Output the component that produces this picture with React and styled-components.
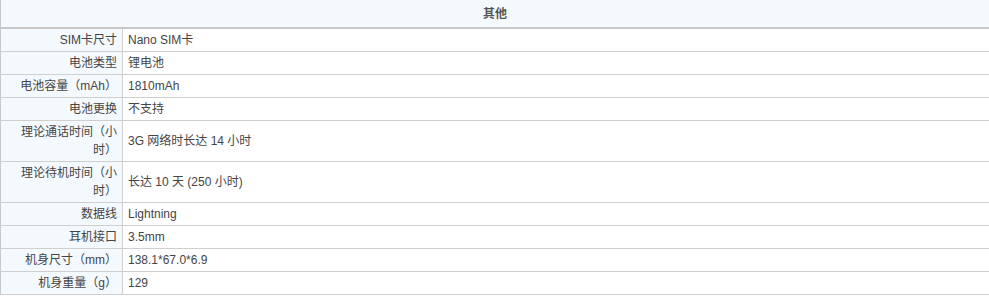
import { createGlobalStyle, styled } from "styled-components";

const Global = createGlobalStyle`
  body {
    margin: 0;
    background: #fff;
    font-family: "Liberation Sans", "Noto Sans CJK SC", sans-serif;
  }
`;

const Table = styled.table`
  width: 100%;
  border-collapse: collapse;
  border-left: 1px solid #c8c8c8;
  font-size: 12px;
  line-height: 18px;
  color: #444;
`;

const Head = styled.th`
  height: 27px;
  padding: 0;
  background: #f4f9fe;
  border-bottom: 2px solid #c8c8c8;
  font-weight: bold;
  color: #555;
  text-align: center;
`;

const Row = styled.tr`
  border-bottom: 1px solid #cfcfcf;
`;

const Label = styled.td`
  width: 111px;
  padding: 2px 5px 2px 5px;
  background: #f4f9fe;
  border-right: 1px solid #cfcfcf;
  text-align: right;
  vertical-align: middle;
`;

const Value = styled.td`
  padding: 2px 5px;
  text-align: left;
  vertical-align: middle;
`;

const specs = [
  ["SIM卡尺寸", "Nano SIM卡"],
  ["电池类型", "锂电池"],
  ["电池容量（mAh）", "1810mAh"],
  ["电池更换", "不支持"],
  ["理论通话时间（小时）", "3G 网络时长达 14 小时"],
  ["理论待机时间（小时）", "长达 10 天 (250 小时)"],
  ["数据线", "Lightning"],
  ["耳机接口", "3.5mm"],
  ["机身尺寸（mm）", "138.1*67.0*6.9"],
  ["机身重量（g）", "129"],
];

export default function App() {
  return (
    <>
      <Global />
      <Table>
        <thead>
          <tr>
            <Head colSpan={2}>其他</Head>
          </tr>
        </thead>
        <tbody>
          {specs.map(([k, v]) => (
            <Row key={k}>
              <Label>{k}</Label>
              <Value>{v}</Value>
            </Row>
          ))}
        </tbody>
      </Table>
    </>
  );
}
